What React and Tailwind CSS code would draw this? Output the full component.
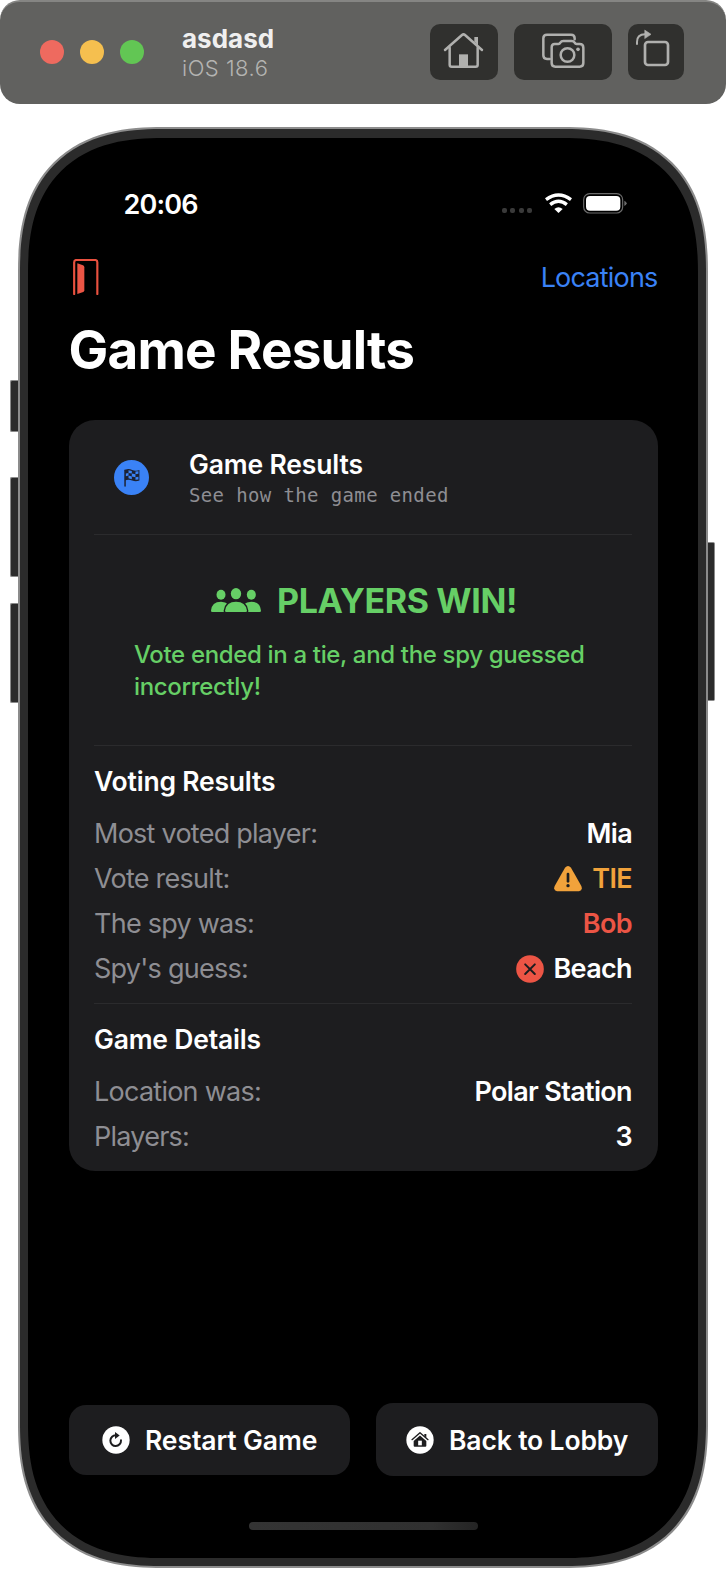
import React from "react";

const DIVIDER = "h-px w-full shrink-0 bg-[#2b2b2d]";

function HomeToolIcon() {
  return (
    <svg className="h-14 w-[68px]" viewBox="201 72 204 168" fill="none" stroke="#b0b0ae" strokeWidth="7.5" strokeLinecap="round" strokeLinejoin="round">
      <path d="M246 150 L297 105 Q301.500 101 306 105 L357 150" />
      <path d="M260 143 V194 Q260 200 266 200 H338 Q344 200 344 194 V143" />
      <path d="M334 124 V111 H345 V138 Z" fill="#b0b0ae" stroke="none" />
      <path d="M288 201 V163 H315 V201 Z" fill="#b0b0ae" stroke="none" />
    </svg>
  );
}

function CameraToolIcon() {
  return (
    <svg className="h-14 w-[98px]" viewBox="453 72 294 168" fill="none" stroke="#b0b0ae" strokeWidth="7.5" strokeLinecap="round" strokeLinejoin="round">
      <path d="M560 177 H552 Q541 177 541 166 V115 Q541 104 552 104 H624 Q635 104 635 115 V118" />
      <path d="M575 132 H586 Q590 132 592 128 Q595 123 601 123 H626 Q632 123 635 128 Q637 132 641 132 H650 Q661 132 661 143 V189 Q661 200 650 200 H577 Q566 200 566 189 V142 Q566 132 575 132 Z" />
      <circle cx="613.5" cy="165" r="20.5" />
      <circle cx="645" cy="148" r="5.5" fill="#b0b0ae" stroke="none" />
    </svg>
  );
}

function RotateToolIcon() {
  return (
    <svg className="size-14" viewBox="795 72 168 168" fill="none" stroke="#b0b0ae" strokeWidth="6" strokeLinecap="round" strokeLinejoin="round">
      <rect x="846" y="126" width="69" height="69" rx="9" strokeWidth="8" />
      <path d="M822 132 V126 Q822 103 846 103" strokeWidth="6" />
      <path d="M846 91 L864 103 L846 115 Z" fill="#b0b0ae" stroke="#b0b0ae" strokeWidth="2" />
    </svg>
  );
}

function WifiIcon() {
  return (
    <svg className="h-5 w-[27px]" viewBox="545 581 81 60" fill="none" stroke="#fff" strokeWidth="10">
      <path d="M548 601 Q585.500 573 623 601" />
      <path d="M560.500 616 Q585.500 596 610.500 616" />
      <path d="M573 629 Q585.500 619 598 629 L585.500 641 Z" fill="#fff" stroke="none" />
    </svg>
  );
}

function BatteryIcon() {
  return (
    <svg className="h-[21px] w-11" viewBox="660 580 132 63">
      <rect x="662" y="582" width="117" height="58" rx="18" fill="none" stroke="#6b6b6b" strokeWidth="3.500" />
      <rect x="669" y="589" width="103" height="44" rx="12" fill="#fff" />
      <path d="M784 603 Q791 606 791 611 Q791 616 784 619 Z" fill="#6b6b6b" />
    </svg>
  );
}

function DoorIcon() {
  return (
    <svg className="h-9 w-[26px]" viewBox="218 57 78 108">
      <path d="M221.500 162 V67 Q221.500 60 228.500 60 H284 Q291 60 291 67 V162" fill="none" stroke="#e9513f" strokeWidth="6.5" strokeLinecap="round" />
      <path d="M231 70 L248 76 Q252 78 252 82 V151 Q252 154 249 156 L231 162 Z" fill="#ec5545" />
    </svg>
  );
}

function FlagIcon() {
  return (
    <svg className="size-[35px]" viewBox="343 659 106 106">
      <circle cx="396" cy="712" r="53" fill="#3a82f6" />
      <path d="M376.500 738 V690" stroke="#1c2233" strokeWidth="4.500" strokeLinecap="round" />
      <path d="M376 689 Q387 684 398 689 Q409 694 420 689 V721 Q409 726 398 721 Q387 716 376 721 Z" fill="#1c2233" />
      <g fill="#3a82f6">
        <path d="M387 690 L397 692 V700 L387 698 Z" />
        <path d="M408 694 L417 693 V701 L408 702 Z" />
        <path d="M379 700 L387 698 V706 L379 708 Z" />
        <path d="M397 700 L408 702 V711 L397 709 Z" />
        <path d="M387 706 L397 709 V717 L387 714 Z" />
        <path d="M408 711 L417 710 V718 L408 719 Z" />
      </g>
    </svg>
  );
}

function PeopleIcon() {
  return (
    <svg className="h-6 w-[50px]" viewBox="63 84 150 72" fill="#66cf66">
      <ellipse cx="93" cy="104.500" rx="13.500" ry="15" />
      <ellipse cx="184" cy="104.500" rx="13.500" ry="15" />
      <path d="M67 156 Q63 156 63 152 Q65 125 93 125 Q121 125 123 156 Z" />
      <path d="M209 156 Q213 156 213 152 Q211 125 184 125 Q155 125 153 156 Z" />
      <path d="M109 156 Q105 156 105 152 Q109 125 138 125 Q167 125 171 152 Q171 156 167 156 Z" stroke="#1d1d1f" strokeWidth="8" />
      <path d="M109 156 Q105 156 105 152 Q109 125 138 125 Q167 125 171 152 Q171 156 167 156 Z" />
      <ellipse cx="138" cy="101" rx="15.500" ry="17" />
    </svg>
  );
}

function WarningIcon() {
  return (
    <svg className="h-[26px] w-7" viewBox="574 377 84 78">
      <path d="M607 382 Q616 372 625 382 L656 437 Q661 450 649 453 H583 Q571 450 576 437 Z" fill="#f1a23b" />
      <path d="M616 401 V423" stroke="#1d1d1f" strokeWidth="8" strokeLinecap="round" />
      <circle cx="616" cy="436" r="5" fill="#1d1d1f" />
    </svg>
  );
}

function CrossIcon() {
  return (
    <svg className="size-7" viewBox="461.500 643 84 84">
      <circle cx="503.500" cy="685" r="41.500" fill="#ec5545" />
      <path d="M489 671 L518 700 M518 671 L489 700" stroke="#1d1d1f" strokeWidth="6" strokeLinecap="round" />
    </svg>
  );
}

function RestartIcon() {
  return (
    <svg className="size-7" viewBox="307 137 84 84">
      <circle cx="349" cy="179" r="41" fill="#fff" />
      <path d="M349 165 A16 16 0 1 0 364 180" fill="none" stroke="#1d1d1f" strokeWidth="6" strokeLinecap="round" />
      <path d="M346 155 L360 165.500 L346 176 Z" fill="#1d1d1f" />
    </svg>
  );
}

function LobbyIcon() {
  return (
    <svg className="size-7" viewBox="131 137 84 84">
      <circle cx="173" cy="179" r="41" fill="#fff" />
      <path d="M149 178 L173 157 L197 178" fill="none" stroke="#1d1d1f" strokeWidth="4" strokeLinecap="round" strokeLinejoin="round" />
      <path d="M186 161 H192 V172 L186 167 Z" fill="#1d1d1f" />
      <path d="M154 182 L173 165.500 L192 182 V196 Q192 199 189 199 H157 Q154 199 154 196 Z" fill="#1d1d1f" />
      <rect x="167.500" y="181" width="11" height="14" fill="#fff" />
    </svg>
  );
}

function Row({ label, children }) {
  return (
    <div className="flex h-[45px] items-center justify-between text-[27px]">
      <span className="tracking-[-0.75px] text-[#8e8e93]">{label}</span>
      <span className="flex items-center font-semibold tracking-[-0.65px] text-white">{children}</span>
    </div>
  );
}

function WindowBar() {
  return (
    <header className="flex h-[104px] w-full rounded-[20px] border-t-2 border-[#858583] bg-[#61615f] pt-[22px]">
      <div className="ml-10 flex gap-4 pt-4">
        <span className="size-6 rounded-full bg-[#ee6a5f]" />
        <span className="size-6 rounded-full bg-[#f5bf4f]" />
        <span className="size-6 rounded-full bg-[#62c654]" />
      </div>
      <div className="ml-[38px] flex flex-col whitespace-nowrap">
        <span className="h-[30px] text-[26px] leading-[30px] font-bold text-[#efefef]">asdasd</span>
        <span className="h-[28px] text-[22px] leading-[28px] font-light tracking-[0.5px] text-[#b4b4b2]">iOS 18.6</span>
      </div>
      <div className="mr-[42px] ml-auto flex gap-4">
        <button className="h-14 rounded-[10px] bg-[#30302e]"><HomeToolIcon /></button>
        <button className="h-14 rounded-[10px] bg-[#30302e]"><CameraToolIcon /></button>
        <button className="h-14 rounded-[10px] bg-[#30302e]"><RotateToolIcon /></button>
      </div>
    </header>
  );
}

function ResultsCard() {
  return (
    <section className="flex h-[751px] w-[589px] shrink-0 flex-col rounded-[26px] bg-[#1d1d1f] px-[25.5px]">
      <div className="flex h-[114px] shrink-0 pt-[28px]">
        <div className="ml-5 pt-[12px]"><FlagIcon /></div>
        <div className="ml-10 flex flex-col whitespace-nowrap">
          <h2 className="h-8 text-[26.5px] leading-8 font-semibold tracking-[-0.15px] text-white">Game Results</h2>
          <p className="mt-px h-7 font-['DejaVu_Sans_Mono',monospace] text-[19px] leading-7 tracking-[0.37px] text-[#8e8e93]">See how the game ended</p>
        </div>
      </div>
      <div className={DIVIDER} />
      <div className="flex h-[210px] shrink-0 flex-col pt-[44px]">
        <div className="ml-[117px] flex h-11 items-center gap-4 text-[#66cf66]">
          <div className="pb-[3px]"><PeopleIcon /></div>
          <span className="text-[34px] leading-[44px] font-bold tracking-[-0.35px] whitespace-nowrap">PLAYERS WIN!</span>
        </div>
        <p className="mt-[16px] ml-10 w-[470px] text-[24px] leading-8 font-medium tracking-[-0.34px] text-[#66cf66]">Vote ended in a tie, and the spy guessed incorrectly!</p>
      </div>
      <div className={DIVIDER} />
      <h3 className="mt-[15px] mb-[11px] h-10 shrink-0 text-[26.5px] leading-10 font-semibold tracking-[-0.2px] text-white">Voting Results</h3>
      <Row label="Most voted player:">Mia</Row>
      <Row label="Vote result:"><span className="mr-[10px] pb-[2px]"><WarningIcon /></span><span className="text-[#f1a23b]">TIE</span></Row>
      <Row label="The spy was:"><span className="text-[#ec5545]">Bob</span></Row>
      <Row label="Spy's guess:"><span className="mr-[9px] pb-[2px]"><CrossIcon /></span>Beach</Row>
      <div className="h-[11px] shrink-0" />
      <div className={DIVIDER} />
      <h3 className="mt-[15px] mb-[11px] h-10 shrink-0 text-[26.5px] leading-10 font-semibold tracking-[-0.2px] text-white">Game Details</h3>
      <Row label="Location was:">Polar Station</Row>
      <Row label="Players:">3</Row>
    </section>
  );
}

function Screen() {
  return (
    <div className="flex size-full flex-col overflow-hidden rounded-[135px] bg-black pl-[40.5px] [corner-shape:superellipse(1.3)]">
      <div className="flex h-[104px] shrink-0 items-start pt-[50px] pl-[55px]">
        <span className="text-[27px] leading-[33px] font-semibold tracking-[-0.8px] text-white">20:06</span>
        <div className="mr-[71px] ml-auto flex pt-[5px]">
          <div className="flex gap-[3.500px] pt-[15px]">
            <i className="size-[5px] rounded-[2px] bg-[#3a3a3a]" />
            <i className="size-[5px] rounded-[2px] bg-[#3a3a3a]" />
            <i className="size-[5px] rounded-[2px] bg-[#3a3a3a]" />
            <i className="size-[5px] rounded-[2px] bg-[#3a3a3a]" />
          </div>
          <div className="ml-[13px]"><WifiIcon /></div>
          <div className="ml-[11px]"><BatteryIcon /></div>
        </div>
      </div>
      <nav className="flex h-[70px] w-[589px] shrink-0 items-start justify-between pt-[17px] pl-[4px]">
        <DoorIcon />
        <a className="pt-px text-[27px] leading-9 tracking-[-0.8px] text-[#3a82f6]">Locations</a>
      </nav>
      <h1 className="h-[108px] shrink-0 pt-[8px] text-[53px] leading-[61px] font-bold tracking-[-0.8px] whitespace-nowrap text-white">Game Results</h1>
      <ResultsCard />
      <div className="mt-[232px] flex w-[589px] items-center justify-between text-[26.5px] font-semibold tracking-[-0.1px] whitespace-nowrap text-white">
        <button className="flex h-[70px] w-[281.5px] items-center rounded-[17px] bg-[#1d1d1f] pl-[33.5px]"><RestartIcon /><span className="ml-[15px] pt-[2px]">Restart Game</span></button>
        <button className="flex h-[73px] w-[281.5px] items-center rounded-[17px] bg-[#1d1d1f] pl-[30px]"><LobbyIcon /><span className="ml-[15px] pt-[2px] tracking-[-0.15px]">Back to Lobby</span></button>
      </div>
      <div className="mt-[46px] ml-[180px] h-2 w-[229px] shrink-0 rounded-full bg-linear-to-r from-[#343434] via-[#303030] via-80% to-[#242424]" />
    </div>
  );
}

export default function App() {
  return (
    <div className="h-[1572px] w-[726px] overflow-hidden bg-white font-['Inter',sans-serif]">
      <WindowBar />
      <div className="mt-[23px] flex">
        <div className="flex w-[18px] shrink-0 flex-col items-end pt-[253px]">
          <i className="h-[52px] w-2 rounded-l-[2px] border border-r-0 border-[#8a8a8a] bg-[#2b2b2b]" />
          <i className="mt-[45px] h-[100px] w-2 rounded-l-[2px] border border-r-0 border-[#8a8a8a] bg-[#2b2b2b]" />
          <i className="mt-[26px] h-[100px] w-2 rounded-l-[2px] border border-r-0 border-[#8a8a8a] bg-[#2b2b2b]" />
        </div>
        <main className="h-[1441px] w-[690px] shrink-0 rounded-[145px] border-2 border-[#8c8c8c] bg-[#2b2b2b] px-2 pt-[9px] pb-2 [corner-shape:superellipse(1.3)]">
          <Screen />
        </main>
        <div className="flex w-[18px] shrink-0 flex-col items-start pt-[415px]">
          <i className="h-[159px] w-[7px] rounded-r-[2px] border border-l-0 border-[#8a8a8a] bg-[#2b2b2b]" />
        </div>
      </div>
    </div>
  );
}
